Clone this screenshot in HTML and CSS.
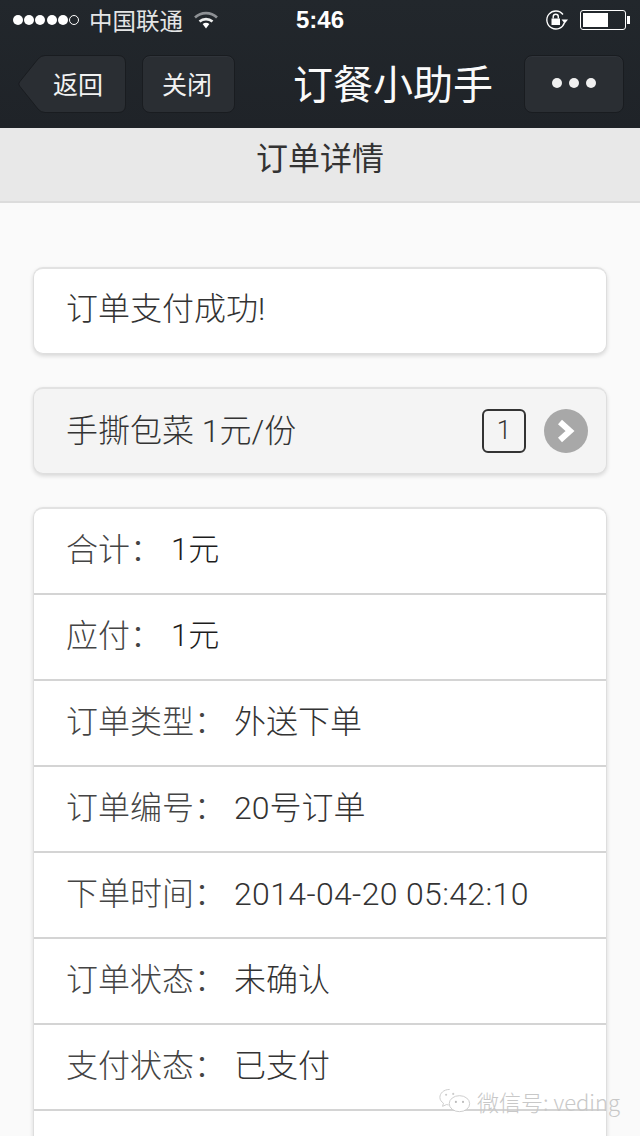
FILE: index.html
```html
<!DOCTYPE html>
<html lang="zh-CN">
<head>
  <meta charset="UTF-8">
  <meta name="viewport" content="width=device-width, initial-scale=1.0">
  <title>订单详情</title>
  <link rel="stylesheet" href="styles.css">
</head>
<body>
  <div class="top">
    <!-- Status bar -->
    <div class="status">
      <div class="status-left">
        <span class="signal"><i></i><i></i><i></i><i></i><i></i><i class="off"></i></span>
        <span class="carrier">中国联通</span>
        <svg class="wifi" width="26" height="20" viewBox="0 0 26 20">
          <path d="M2 7.500 A16 16 0 0 1 24 7.500" fill="none" stroke="#8d9094" stroke-width="2.600"/>
          <path d="M6.500 11.500 A10 10 0 0 1 19.500 11.500" fill="none" stroke="#eceded" stroke-width="2.600"/>
          <path d="M9.600 14 A5.500 5.500 0 0 1 16.400 14 L13 18.500 Z" fill="#fff"/>
        </svg>
      </div>
      <span class="time">5:46</span>
      <div class="status-right">
        <svg class="lock" width="24" height="22" viewBox="0 0 24 22">
          <path d="M19.500 13.500 A9 9 0 1 1 18 5.500" fill="none" stroke="#fff" stroke-width="1.300"/>
          <path d="M16.500 10.500 H23 L19.800 14.500 Z" fill="#fff"/>
          <rect x="6.500" y="9.500" width="8.500" height="6.500" fill="#fff"/>
          <path d="M8.200 9.500 V7.800 A2.500 2.500 0 0 1 13.300 7.800 V9.500" fill="none" stroke="#fff" stroke-width="1.400"/>
        </svg>
        <span class="battery"><span class="battery-level"></span></span>
        <span class="battery-tip"></span>
      </div>
    </div>

    <!-- Nav bar -->
    <div class="nav">
      <div class="nav-left">
        <button class="back">
          <svg class="back-shape" width="108" height="58" viewBox="0 0 108 58">
            <path d="M27 .5 H100 Q107.500 .5 107.500 8 V50 Q107.500 57.500 100 57.500 H27 Q23 57.500 20 54 L1.500 31 Q0 29 1.500 27 L20 4 Q23 .5 27 .5 Z" fill="#2a2e33" stroke="#191c20"/>
          </svg>
          <span class="back-label">返回</span>
        </button>
        <button class="nav-btn close">关闭</button>
      </div>
      <h1 class="nav-title">订餐小助手</h1>
      <button class="nav-btn more"><i></i><i></i><i></i></button>
    </div>
  </div>

  <div class="page-head">订单详情</div>

  <div class="content">
    <div class="card notice">订单支付成功!</div>

    <div class="card item">
      <span class="item-name">手撕包菜 1元/份</span>
      <span class="qty">1</span>
      <span class="go">
        <svg width="20" height="24" viewBox="0 0 20 24">
          <path d="M4 3 L14 12 L4 21" fill="none" stroke="#fff" stroke-width="6"/>
        </svg>
      </span>
    </div>

    <div class="card details">
      <div class="row"><span class="label short">合计：</span><span class="value strong">1元</span></div>
      <div class="row"><span class="label short">应付：</span><span class="value strong">1元</span></div>
      <div class="row"><span class="label">订单类型：</span><span class="value">外送下单</span></div>
      <div class="row"><span class="label">订单编号：</span><span class="value">20号订单</span></div>
      <div class="row"><span class="label">下单时间：</span><span class="value stamp">2014-04-20 05:42:10</span></div>
      <div class="row"><span class="label">订单状态：</span><span class="value">未确认</span></div>
      <div class="row"><span class="label">支付状态：</span><span class="value">已支付</span></div>
      <div class="row"></div>
    </div>
  </div>

  <!-- Watermark -->
  <div class="watermark">
    <svg width="32" height="26" viewBox="0 0 36 28">
      <path d="M12 1 C5 1 1 5.500 1 10 C1 13 3 15 5 16.500 L4 20 L8.500 18 L11 18.500" fill="#fff" stroke="#c8c8c8"/>
      <ellipse cx="23" cy="17" rx="11.500" ry="9" fill="#fff" stroke="#c8c8c8"/>
      <circle cx="19" cy="15" r="1.200" fill="#bbb"/>
      <circle cx="27" cy="15" r="1.200" fill="#bbb"/>
      <circle cx="8" cy="7" r="1.200" fill="#ccc"/>
      <circle cx="16" cy="6" r="1.200" fill="#ccc"/>
    </svg>
    <span>微信号: veding</span>
  </div>
</body>
</html>
```

FILE: styles.css
```css
* {
  box-sizing: border-box;
}

body, html {
  margin: 0;
  height: 1136px;
  overflow: hidden;
}

body {
  position: relative;
  font-family: "Noto Sans CJK SC", "Liberation Sans", sans-serif;
  background: #fafafa;
  color: #333;
}

.top {
  height: 128px;
  background: linear-gradient(#22272c, #1f2328);
  color: #fff;
}

/* Status bar */
.status {
  height: 40px;
  padding: 0 10px 0 13px;
  display: flex;
  align-items: center;
  justify-content: space-between;
  position: relative;
}

.status-left, .status-right {
  display: flex;
  align-items: center;
}

.signal {
  display: flex;
  gap: 1.200px;
  margin-right: 10px;
}

.signal i {
  width: 10px;
  height: 10px;
  border-radius: 50%;
  background: #fff;
}

.signal i.off {
  background: none;
  border: 1px solid #fff;
}

.carrier {
  font-size: 23.500px;
  line-height: 38px;
  color: #e4e5e6;
  margin-right: 10px;
}

.time {
  position: absolute;
  left: 296px;
  top: 0;
  font: bold 24px/40px "Liberation Sans", sans-serif;
}

.lock {
  margin-right: 11px;
}

.battery {
  width: 46px;
  height: 20px;
  border: 1px solid #fff;
  border-radius: 3px;
  padding: 2px;
  display: block;
}

.battery-level {
  display: block;
  width: 25px;
  height: 100%;
  background: #fff;
}

.battery-tip {
  width: 3px;
  height: 8px;
  background: #fff;
  margin-left: 1px;
}

/* Nav bar */
.nav {
  height: 88px;
  padding: 15px 16px 0 18px;
  display: flex;
  justify-content: space-between;
  position: relative;
}

.nav-left {
  display: flex;
  gap: 17px;
}

.nav-btn {
  height: 58px;
  padding: 0 0 3px;
  font-family: inherit;
  font-size: 25px;
  color: #f2f2f2;
  background: #2a2e33;
  border: 1px solid #191c20;
  border-radius: 8px;
  box-shadow: inset 0 1px 0 #30343a;
}

.back {
  width: 108px;
  height: 58px;
  padding: 0 0 3px 35px;
  position: relative;
  background: none;
  border: none;
  font-family: inherit;
  font-size: 25px;
  color: #f2f2f2;
  text-align: left;
}

.back-shape {
  position: absolute;
  left: 0;
  top: 0;
}

.back-label {
  position: relative;
}

.close {
  width: 93px;
  margin-left: -1px;
  padding-right: 3px;
}

.more {
  width: 100px;
  display: flex;
  align-items: center;
  justify-content: center;
  gap: 7px;
}

.more i {
  width: 10px;
  height: 10px;
  border-radius: 50%;
  background: #f0f0f0;
}

.nav-title {
  position: absolute;
  left: 293px;
  top: 15px;
  margin: 0;
  font-size: 40px;
  font-weight: 400;
  line-height: 54px;
  color: #fafafa;
}

/* Page head */
.page-head {
  height: 75px;
  padding-top: 6px;
  background: #e8e8e8;
  border-bottom: 2px solid #dcdcdc;
  text-align: center;
  font-size: 32px;
  line-height: 44px;
}

/* Cards */
.content {
  padding: 64px 33px 0;
}

.card {
  background: #fff;
  border: 1px solid #dedede;
  border-top: 2px solid #e2e2e2;
  border-radius: 10px;
  box-shadow: 0 2px 4px rgba(0, 0, 0, .14);
  margin-bottom: 33px;
  font-family: Roboto, "Noto Sans CJK SC", sans-serif;
  font-size: 32px;
  font-weight: 300;
}

.notice {
  height: 87px;
  padding-left: 32px;
  line-height: 81px;
}

.item {
  height: 87px;
  padding: 0 18px 0 32px;
  display: flex;
  align-items: center;
  background: #f4f4f4;
}

.item-name {
  flex: 1;
  line-height: 78px;
}

.qty {
  width: 44px;
  height: 44px;
  margin-right: 18px;
  border: 2px solid #333;
  border-radius: 6px;
  font-size: 26px;
  line-height: 38px;
  text-align: center;
}

.go {
  width: 44px;
  height: 44px;
  border-radius: 50%;
  background: #a8a8a8;
  display: flex;
  align-items: center;
  justify-content: center;
}

.row {
  height: 86px;
  padding: 0 32px 3px;
  border-bottom: 2px solid #d4d4d4;
  display: flex;
  align-items: center;
  line-height: 70px;
  color: #444;
}

.label {
  width: 168px;
  flex: none;
}

.label.short {
  width: 105px;
}

.value {
  color: #333;
}

.value.strong {
  color: #1c1c1c;
  font-size: 31px;
}

.value.stamp {
  letter-spacing: .35px;
}

/* Watermark */
.watermark {
  position: absolute;
  right: 20px;
  top: 1085px;
  display: flex;
  align-items: center;
  gap: 6px;
  font-size: 22px;
  font-weight: 300;
  color: #c8c8c8;
}
```
